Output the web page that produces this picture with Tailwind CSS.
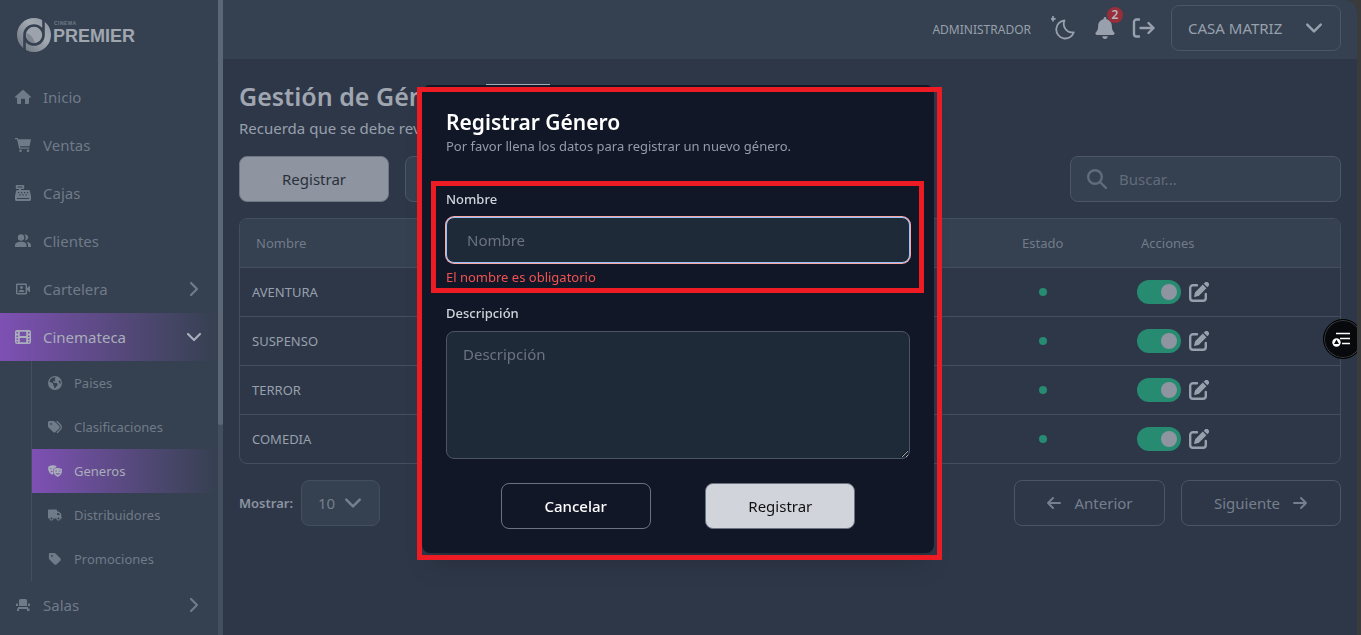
<!DOCTYPE html>
<html lang="es">
<head>
    <meta charset="UTF-8">
    <meta name="viewport" content="width=device-width, initial-scale=1.0">
    <title>Cinema Premier - Géneros</title>
    <script src="https://cdn.jsdelivr.net/npm/@tailwindcss/browser@4"></script>
</head>
<body class="bg-[#3b3b3b] h-screen overflow-hidden pr-1 text-[15px] leading-5 text-[#97a0ac] font-['Segoe_UI','Noto_Sans',sans-serif]">

    <!-- Shared icons -->
    <svg class="hidden">
        <symbol id="chevron" viewBox="0 0 16 16"><path d="M2 5l6 6 6-6" fill="none" stroke="currentColor" stroke-width="2.2" stroke-linecap="round" stroke-linejoin="round"/></symbol>
        <symbol id="edit" viewBox="0 0 20 20">
            <path d="M8 3.200H4a2.800 2.800 0 0 0-2.800 2.800v10A2.800 2.800 0 0 0 4 18.800h10a2.800 2.800 0 0 0 2.800-2.800v-4" fill="none" stroke="currentColor" stroke-width="2.400" stroke-linecap="round"/>
            <path d="M13.800 2.600l3.600 3.600-7.200 7.200q-.5.500-1.200.7l-3.200.8q-.8.100-.7-.7l.8-3.200q.2-.7.700-1.200zM14.700 1.700l1-1a2.500 2.500 0 0 1 3.600 3.600l-1 1z" fill="currentColor"/>
        </symbol>
        <symbol id="arrow" viewBox="0 0 16 16"><path d="M2 8h12M9 3l5 5-5 5" fill="none" stroke="currentColor" stroke-width="2" stroke-linecap="round" stroke-linejoin="round"/></symbol>
    </svg>

    <div class="flex h-full overflow-hidden rounded-tr-xl bg-[#2e3748]">
        <!-- Sidebar -->
        <aside class="flex w-[223px] shrink-0 bg-[#354050]">
            <div class="flex-1 overflow-hidden">
                <a href="#" class="flex h-[73px] items-start pt-4 pl-4 text-[#a0a6af]">
                    <svg class="mt-px size-9 shrink-0" viewBox="0 0 36 36">
                        <defs>
                            <linearGradient id="ring" x1="0" y1="1" x2="1" y2="0"><stop offset="0" stop-color="#656e7b"/><stop offset="0.600" stop-color="#a3a9b1"/><stop offset="1" stop-color="#8f959f"/></linearGradient>
                        </defs>
                        <circle cx="18" cy="18" r="17" fill="url(#ring)"/>
                        <circle cx="18" cy="18" r="8.200" fill="#9da3ac"/>
                        <path d="M10 16q6 1 9 10-8 1-9-10z" fill="#7d8590"/>
                        <path d="M27.500 0v18a9.500 9.500 0 1 1-19 0v18M8.500 18a9.500 9.500 0 0 1 19 0" fill="none" stroke="#354050" stroke-width="2.600"/>
                    </svg>
                    <span class="ml-px flex flex-col pt-1 font-['Liberation_Sans',sans-serif] font-bold">
                        <span class="pl-px text-[5px] leading-[6px] tracking-widest text-[#717a87]">CINEMA</span>
                        <span class="text-[18px] leading-5">PREMIER</span>
                    </span>
                </a>
                <nav class="text-[#707b89]">
                    <a href="#" class="flex h-12 items-center gap-3 pl-[15px]">
                        <svg class="size-4" viewBox="0 0 16 16" fill="currentColor"><path d="M7.300 1.200a1 1 0 0 1 1.400 0l7 6.200c.6.600.2 1.400-.5 1.400H14v5a1.200 1.200 0 0 1-1.200 1.200H10v-4.500a.8.800 0 0 0-.8-.8H6.800a.8.800 0 0 0-.8.800V15H3.200A1.200 1.200 0 0 1 2 13.800v-5H.8c-.7 0-1.100-.8-.5-1.400z"/></svg>
                        <span>Inicio</span>
                    </a>
                    <a href="#" class="flex h-12 items-center gap-3 pl-[15px]">
                        <svg class="size-4" viewBox="0 0 16 16" fill="currentColor"><path d="M0 1h2.800l.4 1.200H16l-1.500 7H5l.3 1.300h9v1.300H4.200L2 2.300H0z"/><circle cx="5.500" cy="13.800" r="1.300"/><circle cx="13" cy="13.800" r="1.300"/></svg>
                        <span>Ventas</span>
                    </a>
                    <a href="#" class="flex h-12 items-center gap-3 pl-[15px]">
                        <svg class="size-4" viewBox="0 0 16 16" fill="currentColor" fill-rule="evenodd"><path d="M1.500 0h7a.7.700 0 0 1 .7.700v2.600a.7.700 0 0 1-.7.700H6v1h7.500a1.500 1.500 0 0 1 1.500 1.200L16 11v3.500a1.500 1.500 0 0 1-1.500 1.500h-13A1.500 1.500 0 0 1 0 14.500V11l1-4.800A1.500 1.500 0 0 1 2.500 5H4V4H1.500a.7.700 0 0 1-.7-.7V.7a.7.700 0 0 1 .7-.7zM2.500 1.500v1h5v-1zM3 7v1.200h1.200V7zm3 0v1.200h1.200V7zm3 0v1.200h1.200V7zm3 0v1.200h1.200V7zM4.500 9.300v1.200h1.200V9.300zm3 0v1.200h1.200V9.300zm3 0v1.200h1.200V9.300zM2 13v1h12v-1z"/></svg>
                        <span>Cajas</span>
                    </a>
                    <a href="#" class="flex h-12 items-center gap-3 pl-[15px]">
                        <svg class="size-4" viewBox="0 0 16 16" fill="currentColor"><circle cx="6" cy="4.500" r="3.200"/><path d="M0 14v-1.500C0 10 2 8.800 6 8.800s5.500 1.200 5.500 3.700V14zM9.500 1.500a3 3 0 1 1 .3 5.900 5 5 0 0 0-.3-5.900zM11.500 9c3 .2 4.500 1.300 4.500 3.500V14h-3v-1.500c0-1.500-.4-2.600-1.500-3.500z"/></svg>
                        <span>Clientes</span>
                    </a>
                    <a href="#" class="flex h-12 items-center gap-3 pr-4 pl-[15px]">
                        <svg class="size-4" viewBox="0 0 16 16" fill="currentColor"><rect x="1.700" y="3.200" width="9.600" height="9.600" rx="0.600" fill="none" stroke="currentColor" stroke-width="1.400"/><circle cx="6.500" cy="6.500" r="1.400"/><path d="M3.800 11c0-1.500 1-2.200 2.700-2.200S9.200 9.500 9.200 11zM12 7l3-2.500v7L12 9z"/></svg>
                        <span class="flex-1">Cartelera</span>
                        <svg class="size-4 -rotate-90"><use href="#chevron"/></svg>
                    </a>
                    <a href="#" class="flex h-12 items-center gap-3 bg-linear-to-r from-[#7e50b4] to-[#354050] pr-4 pl-[15px] text-[#a9aeba]">
                        <svg class="size-4" viewBox="0 0 16 16" fill="currentColor" fill-rule="evenodd"><path d="M2 1h12a2 2 0 0 1 2 2v10a2 2 0 0 1-2 2H2a2 2 0 0 1-2-2V3a2 2 0 0 1 2-2zM1.500 3v1.500H3V3zm0 3.500V8H3V6.500zm0 3V11H3V9.500zm0 2.800v1.200H3v-1.200zM4.800 2.800V7h6.400V2.800zm0 6.200v4.200h6.400V9zM13 3v1.500h1.500V3zm0 3.500V8h1.500V6.500zm0 3V11h1.500V9.500zm0 2.800v1.200h1.500v-1.200z"/></svg>
                        <span class="flex-1">Cinemateca</span>
                        <svg class="size-4"><use href="#chevron"/></svg>
                    </a>
                    <div class="ml-[31px] border-l border-[#434e5e] text-[13px]">
                        <a href="#" class="flex h-11 items-center gap-3 pl-4">
                            <svg class="size-3.5" viewBox="0 0 512 512" fill="currentColor"><path d="M57.7 193l9.400 16.400c8.300 14.500 21.900 25.200 38 29.800L163 255.700c17.200 4.900 29 20.600 29 38.500v39.900c0 11 6.200 21 16 25.900s16 14.900 16 25.900v39c0 15.600 14.900 26.900 29.900 22.600c16.100-4.600 28.600-17.500 32.700-33.800l2.800-11.200c4.200-16.900 15.200-31.400 30.300-40l8.100-4.600c15-8.500 24.200-24.500 24.200-41.700v-8.300c0-12.700-5.100-24.900-14.100-33.900l-3.900-3.900c-9-9-21.200-14.100-33.900-14.100H257c-11.100 0-22.100-2.900-31.800-8.400l-34.500-19.700c-4.300-2.500-7.600-6.500-9.200-11.200c-3.200-9.600 1.100-20 10.200-24.500l5.900-3c6.600-3.300 14.300-3.900 21.300-1.500l23.200 7.700c8.200 2.700 17.200-.4 21.900-7.500c4.700-7 4.200-16.300-1.200-22.800l-13.600-16.300c-10-12-9.900-29.500 .3-41.300l15.700-18.300c8.800-10.300 10.200-25 3.500-36.700l-2.400-4.200c-3.500-.2-6.900-.3-10.400-.3C163.100 48 84.400 108.900 57.700 193zM464 256c0-36.800-9.600-71.400-26.400-101.500L412 164.800c-15.700 6.300-23.800 23.800-18.500 39.800l16.900 50.700c3.500 10.400 12 18.300 22.600 20.900l29.100 7.300c1.200-9 1.800-18.200 1.800-27.500zM0 256a256 256 0 1 1 512 0A256 256 0 1 1 0 256z"/></svg>
                            <span>Paises</span>
                        </a>
                        <a href="#" class="flex h-11 items-center gap-3 pl-4">
                            <svg class="size-3.5" viewBox="0 0 512 512" fill="currentColor"><path d="M345 39.100L472.800 168.400c52.400 53 52.400 138.200 0 191.200L360.800 472.900c-9.300 9.400-24.500 9.500-33.900 .2s-9.500-24.500-.2-33.900L438.600 325.900c33.900-34.300 33.900-89.400 0-123.700L310.900 72.900c-9.300-9.400-9.200-24.600 .2-33.900s24.600-9.200 33.900 .2zM0 229.500V80C0 53.500 21.500 32 48 32H197.500c17 0 33.300 6.700 45.300 18.700l168 168c25 25 25 65.500 0 90.500L277.300 442.700c-25 25-65.500 25-90.500 0l-168-168C6.700 262.700 0 246.500 0 229.500zM144 144a32 32 0 1 0 -64 0 32 32 0 1 0 64 0z"/></svg>
                            <span>Clasificaciones</span>
                        </a>
                        <a href="#" class="flex h-11 items-center gap-3 bg-linear-to-r from-[#7e50b4] to-[#354050] pl-4 text-[#a9aeba]">
                            <svg class="size-3.5" viewBox="0 0 16 14" fill="currentColor" fill-rule="evenodd"><path d="M.3 2Q4.500-.5 9.800 1.200L9.300 2.900Q6.500 3 6.100 5v5L4.800 11.300Q.8 9 .2 5.500zM2.300 4.300q1-.9 2 0v.8q-1-.6-2 0zM3 7.800q1-1.200 2-.9v1.300Q4 8 3 8.600z"/><path d="M6.800 4.200Q11.500 2.600 16 4.800l-.2 4.200Q14.500 12.700 11 13.800 7.300 12.500 6.500 9zM8.300 6.800q1-1 2 0v.8q-1-.6-2 0zM12.300 6.800q1-1 2 0v.8q-1-.6-2 0zM8.500 9.300q2.700 1 5.400 0-.7 2-2.700 2T8.500 9.300z"/></svg>
                            <span>Generos</span>
                        </a>
                        <a href="#" class="flex h-11 items-center gap-3 pl-4">
                            <svg class="size-3.5" viewBox="0 0 640 512" fill="currentColor"><path d="M48 0C21.500 0 0 21.500 0 48V368c0 26.500 21.500 48 48 48H64c0 53 43 96 96 96s96-43 96-96H384c0 53 43 96 96 96s96-43 96-96h32c17.700 0 32-14.300 32-32s-14.300-32-32-32V288 256 237.300c0-17-6.700-33.300-18.700-45.300L512 114.700c-12-12-28.300-18.700-45.300-18.700H416V48c0-26.500-21.500-48-48-48H48zM416 160h50.700L544 237.300V256H416V160zM112 416a48 48 0 1 1 96 0 48 48 0 1 1 -96 0zm368-48a48 48 0 1 1 0 96 48 48 0 1 1 0-96z"/></svg>
                            <span>Distribuidores</span>
                        </a>
                        <a href="#" class="flex h-11 items-center gap-3 pl-4">
                            <svg class="size-3.5" viewBox="0 0 448 512" fill="currentColor"><path d="M0 80V229.500c0 17 6.700 33.300 18.700 45.300l176 176c25 25 65.500 25 90.500 0L418.700 317.300c25-25 25-65.500 0-90.500l-176-176c-12-12-28.300-18.700-45.300-18.700H48C21.500 32 0 53.500 0 80zm112 32a32 32 0 1 1 0 64 32 32 0 1 1 0-64z"/></svg>
                            <span>Promociones</span>
                        </a>
                    </div>
                    <a href="#" class="flex h-12 items-center gap-3 pr-4 pl-[15px]">
                        <svg class="size-4" viewBox="0 0 16 16" fill="currentColor"><path d="M5.500 2h5A1.500 1.500 0 0 1 12 3.500V9H4V3.500A1.500 1.500 0 0 1 5.500 2zM3 10h10v1.500h1.500V14H12v-2H4v2H2v-2.500h1z"/><rect x="1" y="6.500" width="2" height="2.500" rx="0.500"/><rect x="13" y="6.500" width="2" height="2.500" rx="0.500"/></svg>
                        <span class="flex-1">Salas</span>
                        <svg class="size-4 -rotate-90"><use href="#chevron"/></svg>
                    </a>
                </nav>
            </div>
            <!-- Scroll track -->
            <div class="w-[5px] bg-[#434e5e]"><div class="h-[67%] rounded-b bg-[#5c6776]"></div></div>
        </aside>

        <div class="min-w-0 flex-1">
            <header class="flex h-[59px] items-center justify-end bg-[#354050] px-4 pb-1">
                <span class="mr-5 pt-1 text-[12px]">ADMINISTRADOR</span>
                <button type="button" aria-label="Tema" class="mr-5">
                    <svg class="size-6" viewBox="0 0 24 24" fill="none" stroke="currentColor" stroke-width="1.800" stroke-linecap="round" stroke-linejoin="round"><path d="M13.500 4.500a9 9 0 1 0 9.300 11.800A8.500 8.500 0 0 1 13.500 4.500zM2 .8v4M0 2.800h4"/></svg>
                </button>
                <button type="button" aria-label="Notificaciones" class="relative mr-4">
                    <svg class="h-[22px] w-5" viewBox="0 0 448 512" fill="currentColor"><path d="M224 0c-17.700 0-32 14.300-32 32V51.200C119 66 64 130.600 64 208v18.800c0 47-17.300 92.400-48.500 127.600l-7.400 8.300c-8.400 9.400-10.400 22.900-5.300 34.400S19.400 416 32 416H416c12.600 0 24-7.400 29.200-18.900s3.100-25-5.300-34.400l-7.400-8.300C401.300 319.200 384 273.900 384 226.800V208c0-77.400-55-142-128-156.800V32c0-17.700-14.300-32-32-32zm45.300 493.300c12-12 18.700-28.300 18.700-45.300H224 160c0 17 6.700 33.300 18.700 45.300s28.300 18.700 45.300 18.700s33.300-6.700 45.300-18.700z"/></svg>
                    <span class="absolute -top-2.5 -right-2 flex size-4 items-center justify-center rounded-full bg-[#992e3b] text-[12px] leading-4 font-semibold text-[#b5b9c0]">2</span>
                </button>
                <button type="button" aria-label="Salir" class="mr-4">
                    <svg class="h-5 w-6" viewBox="0 0 24 20" fill="none" stroke="currentColor" stroke-width="2.400" stroke-linecap="round" stroke-linejoin="round"><path d="M8 1.500H5.500A2.500 2.500 0 0 0 3 4v12a2.500 2.500 0 0 0 2.500 2.500H8M9.500 10h13M17.500 5l5 5-5 5"/></svg>
                </button>
                <div class="relative">
                    <select aria-label="Sucursal" class="h-[46px] w-[170px] appearance-none rounded-lg border border-[#4b5666] px-4">
                        <option>CASA MATRIZ</option>
                    </select>
                    <svg class="pointer-events-none absolute top-3.5 right-4.5 size-4.5"><use href="#chevron"/></svg>
                </div>
            </header>

            <main class="px-4 pt-[19px]">
                <h1 class="text-[25px] leading-9 font-semibold text-[#a0a6b0]">Gestión de Géneros</h1>
                <p class="mt-1">Recuerda que se debe revisar</p>

                <div class="mt-[18px] flex gap-4">
                    <button type="button" class="h-[46px] w-[150px] rounded-lg border border-[#6c7684] bg-[#8e95a1] text-[#2a303a]">Registrar</button>
                    <button type="button" class="h-[46px] w-[150px] rounded-lg border border-[#4b5666] bg-[#354050]" aria-label="Exportar"></button>
                    <label class="ml-auto flex h-[46px] w-[271px] items-center gap-3 rounded-lg border border-[#4b5666] bg-[#354050] px-4 text-[#616c7b]">
                        <svg class="size-5 shrink-0" viewBox="0 0 20 20" fill="none" stroke="currentColor" stroke-width="2.400" stroke-linecap="round"><circle cx="8" cy="8" r="6.800"/><path d="M13 13l6 6"/></svg>
                        <input type="text" aria-label="Buscar" placeholder="Buscar..." class="w-full min-w-0 bg-transparent outline-none placeholder:text-[#616c7b]">
                    </label>
                </div>

                <div class="mt-4 overflow-hidden rounded-lg border border-[#434e5e]">
                    <table class="w-full text-left text-[13px]">
                        <thead class="bg-[#354050] text-[#717c8a]">
                            <tr class="h-12">
                                <th class="px-4 font-normal">Nombre</th>
                                <th class="w-[119px] px-4 font-normal">Estado</th>
                                <th class="w-[215px] px-4 font-normal">Acciones</th>
                            </tr>
                        </thead>
                        <tbody id="rows"></tbody>
                    </table>
                </div>

                <div class="mt-4 flex items-center text-[#757f8d]">
                    <label for="limit" class="mr-2 text-[13px] font-semibold text-[#8b94a0]">Mostrar:</label>
                    <div class="relative">
                        <select id="limit" class="h-[46px] w-[79px] appearance-none rounded-lg border border-[#434e5e] bg-[#354050] px-4">
                            <option>10</option>
                        </select>
                        <svg class="pointer-events-none absolute top-3.5 right-4.5 size-4.5"><use href="#chevron"/></svg>
                    </div>
                    <button type="button" class="ml-auto flex h-[46px] w-[151px] items-center justify-center gap-3 rounded-lg border border-[#4b5565]">
                        <svg class="size-4 rotate-180"><use href="#arrow"/></svg>Anterior
                    </button>
                    <button type="button" class="ml-4 flex h-[46px] w-40 items-center justify-center gap-3 rounded-lg border border-[#4b5565]">
                        Siguiente<svg class="size-4"><use href="#arrow"/></svg>
                    </button>
                </div>
            </main>
        </div>
    </div>

    <!-- Register modal -->
    <div class="fixed inset-y-0 right-[5px] left-0 flex items-start justify-center pt-[85px]">
        <div role="dialog" aria-labelledby="modalTitle" class="relative w-full max-w-lg rounded-lg bg-[#111726] px-6 pt-[23px] pb-6 shadow-xl">
            <div class="absolute -top-px left-16 h-px w-16 bg-[#a5abb4]"></div>
            <h2 id="modalTitle" class="text-[21px] leading-7 font-semibold text-white">Registrar Género</h2>
            <p class="text-[13px] leading-5 text-[#959ba8]">Por favor llena los datos para registrar un nuevo género.</p>

            <form class="mt-[33px]" novalidate onsubmit="return false">
                <div class="relative">
                    <label for="nombre" class="block text-[13px] leading-5 font-medium text-[#d1d5db]">Nombre</label>
                    <input id="nombre" type="text" placeholder="Nombre" class="mt-2 block h-[46px] w-full rounded-lg border border-[#93c5fd] bg-[#1f2a39] px-5 text-white ring-1 ring-[#fca5a5] outline-none placeholder:text-[#6b7280]">
                    <p class="mt-1 text-[13px] leading-5 text-[#f05252]">El nombre es obligatorio</p>
                    <div class="pointer-events-none absolute -top-2 -right-3.5 -bottom-1.5 -left-[15px] border-5 border-[#ed1c24]"></div>
                </div>
                <label for="descripcion" class="mt-4 block text-[13px] leading-5 font-medium text-[#d1d5db]">Descripción</label>
                <textarea id="descripcion" placeholder="Descripción" class="mt-2 block h-32 w-full resize rounded-lg border border-[#4b5563] bg-[#1f2a39] px-4 py-3 text-white outline-none placeholder:text-[#6b7280]"></textarea>
                <div class="mt-6 flex justify-evenly">
                    <button type="button" class="h-[46px] w-[150px] rounded-lg border border-[#6b7280] font-medium text-white">Cancelar</button>
                    <button type="submit" class="h-[46px] w-[150px] rounded-lg border border-[#6b7280] bg-[#d1d5db] text-[#111111]">Registrar</button>
                </div>
            </form>
            <div class="pointer-events-none absolute top-0.5 -right-2 -bottom-[7px] -left-[5px] border-5 border-[#ed1c24]"></div>
        </div>
    </div>

    <!-- Floating reader button -->
    <div class="pointer-events-none fixed top-[319px] right-1 h-10 w-[34px] overflow-hidden">
        <button type="button" aria-label="Lector" class="pointer-events-auto flex size-10 items-center justify-center rounded-full border border-black bg-[#07090d] pr-1 ring-1 ring-[#3a3d42] ring-inset">
            <svg class="size-5 shrink-0" viewBox="0 0 20 20" fill="none" stroke="#ffffff" stroke-width="1.500"><path d="M5 4.500h14M9 9.500h10M11 14.500h8"/><circle cx="5.500" cy="13.500" r="4.200" fill="#ffffff" stroke="none"/><path d="M5.500 10.500l2.500 4.500H3z" fill="#07090d" stroke="none"/></svg>
        </button>
    </div>

    <script>
        const generos = ['AVENTURA', 'SUSPENSO', 'TERROR', 'COMEDIA'];

        document.getElementById('rows').innerHTML = generos.map((nombre) => `
            <tr class="h-[49px] border-t border-[#434e5e]">
                <td class="px-3">${nombre}</td>
                <td class="pl-[33px]"><span class="block size-2 rounded-full bg-[#278b71]"></span></td>
                <td class="px-3">
                    <div class="flex items-center gap-2">
                        <label class="flex h-6 w-11 items-center justify-end rounded-full bg-[#278b71] pr-1">
                            <input type="checkbox" checked aria-label="Estado de ${nombre}" class="size-4 appearance-none rounded-full bg-[#8e95a1]">
                        </label>
                        <button type="button" aria-label="Editar ${nombre}"><svg class="size-5"><use href="#edit"/></svg></button>
                    </div>
                </td>
            </tr>`).join('');
    </script>
</body>
</html>
